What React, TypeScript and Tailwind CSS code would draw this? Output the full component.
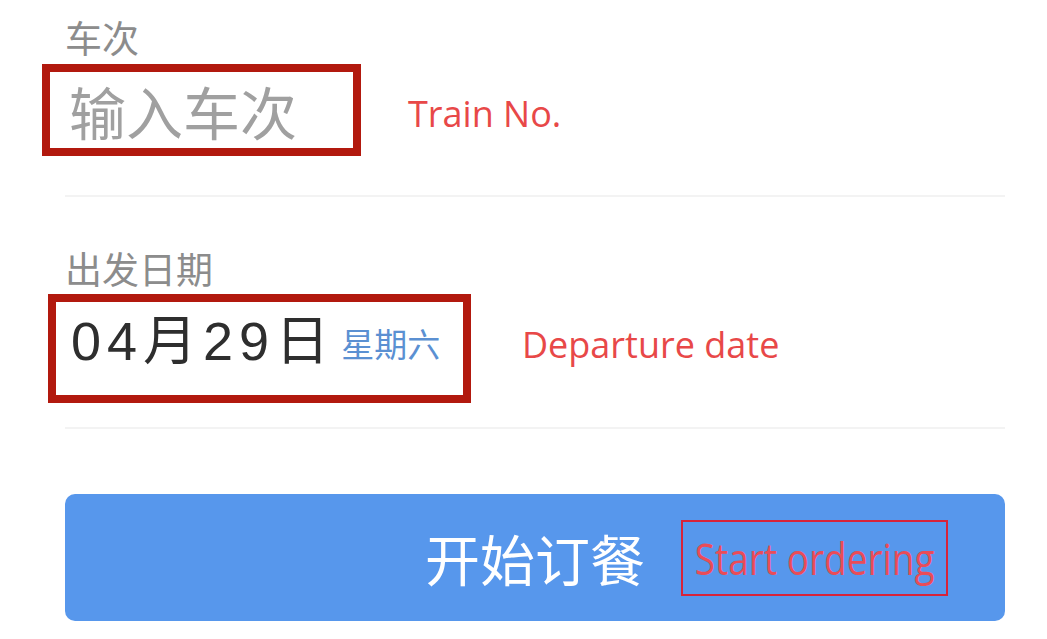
const cjk = { fontFamily: '"Noto Sans CJK SC", "Noto Sans", sans-serif' };
const dateFont = { fontFamily: '"Liberation Sans", "Noto Sans CJK SC", sans-serif' };
const noteFont = { fontFamily: '"Open Sans", "Noto Sans", sans-serif' };

const Divider = () => <div className="h-[2px] bg-[#f3f3f3]" />;

const App = () => {
    return (
        <div className="min-h-screen bg-white pl-[65px] pr-[42px] pt-[19px]" style={cjk}>
            {/* train number */}
            <div className="text-[37px] leading-[37px] text-[#8c8c8c]">车次</div>
            <div className="mt-[8px] -ml-[23px] flex items-center">
                <div className="w-[319px] h-[92px] border-[8px] border-[#b2190e] flex items-center pl-[19px]">
                    <span className="text-[57px] leading-none text-[#a0a0a0]">输入车次</span>
                </div>
                <span className="ml-[47px] mt-[8px] text-[36px] text-[#e84848]" style={noteFont}>
                    Train No.
                </span>
            </div>
            <div className="mt-[39px]">
                <Divider />
            </div>

            {/* departure date */}
            <div className="mt-[53px] text-[37px] leading-[37px] text-[#8c8c8c]">出发日期</div>
            <div className="mt-[7px] -ml-[17px] flex items-center">
                <div className="w-[423px] h-[109px] border-[8px] border-[#b2190e] flex items-center pl-[15px] pb-[16px]">
                    <span className="text-[54px] leading-none tracking-[6px] text-[#2e2e2e]" style={dateFont}>
                        04月29日
                    </span>
                    <span className="ml-[6px] mt-[6px] text-[33px] leading-none text-[#5b90d2]">星期六</span>
                </div>
                <span className="ml-[51px] -mt-[8px] text-[36px] text-[#e84848]" style={noteFont}>
                    Departure date
                </span>
            </div>
            <div className="mt-[24px]">
                <Divider />
            </div>

            {/* submit */}
            <button className="mt-[65px] w-full h-[127px] rounded-[10px] bg-[#5797ec] flex items-center justify-center">
                <span className="relative text-[55px] leading-none text-white">
                    开始订餐
                    <span
                        className="absolute left-full top-1/2 -translate-y-1/2 ml-[36px] w-[267px] h-[76px] border-2 border-[#d8233a] flex items-center justify-center"
                    >
                        <span className="text-[44px] leading-none text-[#ea4c58] whitespace-nowrap scale-x-[0.84]" style={noteFont}>
                            Start ordering
                        </span>
                    </span>
                </span>
            </button>
        </div>
    );
};
export default App;
